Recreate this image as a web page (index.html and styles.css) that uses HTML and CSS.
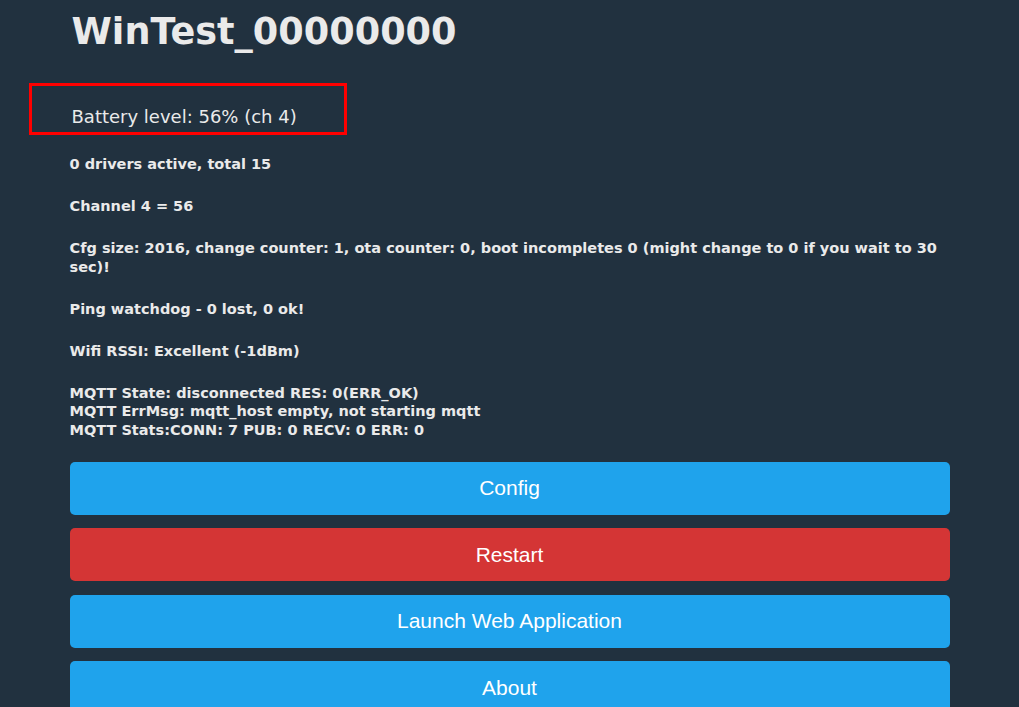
FILE: index.html
```html
<!DOCTYPE html>
<html>
<head>
<meta charset="utf-8">
<link rel="stylesheet" href="styles.css">
</head>
<body>
<div class="page">
  <h1 class="title">WinTest_00000000</h1>
  <div class="battery">Battery level: 56% (ch 4)<span class="mark"></span></div>
  <div class="info">0 drivers active, total 15</div>
  <div class="info">Channel 4 = 56</div>
  <div class="info">Cfg size: 2016, change counter: 1, ota counter: 0, boot incompletes 0 (might change to 0 if you wait to 30 sec)!</div>
  <div class="info">Ping watchdog - 0 lost, 0 ok!</div>
  <div class="info">Wifi RSSI: Excellent (-1dBm)</div>
  <div class="info">MQTT State: disconnected RES: 0(ERR_OK)<br>MQTT ErrMsg: mqtt_host empty, not starting mqtt<br>MQTT Stats:CONN: 7 PUB: 0 RECV: 0 ERR: 0</div>
  <div class="buttons">
    <button class="btn">Config</button>
    <button class="btn red">Restart</button>
    <button class="btn">Launch Web Application</button>
    <button class="btn">About</button>
  </div>
</div>
</body>
</html>
```
FILE: styles.css
```css
html, body {
  margin: 0;
  padding: 0;
  background: #21313f;
}
body {
  color: #eaeaea;
  font-family: "DejaVu Sans", Verdana, sans-serif;
}
.page {
  width: 880px;
  margin: 0 auto;
  padding-top: 10px;
}
.title {
  margin: 0 0 0 2px;
  font-size: 36.6px;
  line-height: 44px;
  font-weight: bold;
}
.battery {
  position: relative;
  margin: 52px 0 27px 2px;
  font-size: 18px;
  line-height: 22px;
}
.mark {
  position: absolute;
  left: -43px;
  top: -23px;
  width: 312px;
  height: 46px;
  border: 3px solid #ff0000;
}
.info {
  font-size: 14.5px;
  font-weight: bold;
  line-height: 18.5px;
  margin-bottom: 23.5px;
}
.buttons {
  display: flex;
  flex-direction: column;
  gap: 13.5px;
  margin-top: -1px;
}
.btn {
  display: block;
  width: 100%;
  height: 53px;
  border: none;
  border-radius: 5px;
  background: #1fa3ec;
  color: #ffffff;
  font-family: "Liberation Sans", Arial, sans-serif;
  font-size: 21px;
  padding: 0;
}
.btn.red {
  background: #d43535;
}
```
